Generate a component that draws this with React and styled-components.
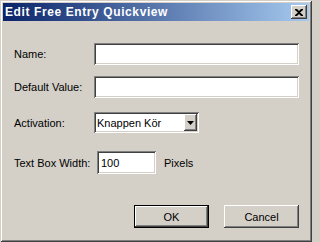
import React from "react";
import styled, { createGlobalStyle } from "styled-components";

const Global = createGlobalStyle`
  html, body { margin: 0; padding: 0; background: #d4d0c8; }
  body { font-family: Tahoma, "Liberation Sans", Arial, sans-serif; font-size: 11px; color: #000; }
`;

const Window = styled.div`
  width: 312px;
  height: 242px;
  box-sizing: border-box;
  background: #d4d0c8;
  padding: 3px;
  display: flex;
  flex-direction: column;
  box-shadow: inset 1px 1px 0 #d4d0c8, inset -1px -1px 0 #404040,
    inset 2px 2px 0 #ffffff, inset -2px -2px 0 #808080;
`;

const TitleBar = styled.div`
  height: 18px;
  display: flex;
  align-items: center;
  justify-content: space-between;
  padding: 0 2px 0 2px;
  background: linear-gradient(to right, #0a246a, #a6caf0);
`;

const Title = styled.span`
  color: #fff;
  font-weight: bold;
  font-size: 12px;
  letter-spacing: 0.6px;
`;

const CloseBtn = styled.div`
  width: 16px;
  height: 14px;
  box-sizing: border-box;
  background: #d4d0c8;
  display: flex;
  align-items: center;
  justify-content: center;
  box-shadow: inset -1px -1px 0 #404040, inset 1px 1px 0 #ffffff,
    inset -2px -2px 0 #808080;
`;

const Body = styled.div`
  flex: 1;
  display: flex;
  flex-direction: column;
  padding: 22px 10px 11px 11px;
`;

const Row = styled.div`
  display: flex;
  align-items: center;
  height: ${(p) => p.h || 22}px;
  margin-top: ${(p) => p.mt || 0}px;
`;

const Label = styled.label`
  width: ${(p) => p.w || 80}px;
  flex: none;
`;

const Field = styled.div`
  box-sizing: border-box;
  height: 100%;
  width: ${(p) => (p.w ? `${p.w}px` : "auto")};
  flex: ${(p) => (p.w ? "none" : 1)};
  background: #fff;
  display: flex;
  align-items: center;
  padding: 0 4px;
  box-shadow: inset 1px 1px 0 #808080, inset -1px -1px 0 #ffffff,
    inset 2px 2px 0 #404040, inset -2px -2px 0 #d4d0c8;
`;

const Select = styled.div`
  box-sizing: border-box;
  width: 105px;
  height: 100%;
  background: #fff;
  display: flex;
  align-items: stretch;
  padding: 2px;
  box-shadow: inset 1px 1px 0 #808080, inset -1px -1px 0 #ffffff,
    inset 2px 2px 0 #404040, inset -2px -2px 0 #d4d0c8;
`;

const SelectText = styled.span`
  flex: 1;
  display: flex;
  align-items: center;
  padding-left: 1px;
`;

const DropBtn = styled.div`
  width: 13px;
  flex: none;
  background: #d4d0c8;
  display: flex;
  align-items: center;
  justify-content: center;
  box-shadow: inset -1px -1px 0 #404040, inset 1px 1px 0 #ffffff,
    inset -2px -2px 0 #808080;
`;

const Unit = styled.span`
  margin-left: 8px;
`;

const Buttons = styled.div`
  margin-top: auto;
  display: flex;
  justify-content: flex-end;
  gap: 15px;
`;

const Button = styled.button`
  width: 75px;
  height: 23px;
  box-sizing: border-box;
  border: ${(p) => (p.primary ? "1px solid #000" : "none")};
  padding: 0;
  font: inherit;
  color: #000;
  background: #d4d0c8;
  box-shadow: inset -1px -1px 0 #404040, inset 1px 1px 0 #ffffff,
    inset -2px -2px 0 #808080;
`;

export default function App() {
  return (
    <>
      <Global />
      <Window>
        <TitleBar>
          <Title>Edit Free Entry Quickview</Title>
          <CloseBtn>
            <svg width="8" height="7" viewBox="0 0 8 7">
              <path d="M0 0h2l2 2 2-2h2v1L5 3.5 8 6v1H6L4 5 2 7H0V6l3-2.5L0 1z" fill="#000" />
            </svg>
          </CloseBtn>
        </TitleBar>
        <Body>
          <Row>
            <Label>Name:</Label>
            <Field />
          </Row>
          <Row mt={11}>
            <Label>Default Value:</Label>
            <Field />
          </Row>
          <Row mt={14} h={21}>
            <Label>Activation:</Label>
            <Select>
              <SelectText>Knappen Kör</SelectText>
              <DropBtn>
                <svg width="7" height="4" viewBox="0 0 7 4">
                  <path d="M0 0h7L3.5 4z" fill="#000" />
                </svg>
              </DropBtn>
            </Select>
          </Row>
          <Row mt={18} h={23}>
            <Label w={83}>Text Box Width:</Label>
            <Field w={59}>100</Field>
            <Unit>Pixels</Unit>
          </Row>
          <Buttons>
            <Button primary>OK</Button>
            <Button>Cancel</Button>
          </Buttons>
        </Body>
      </Window>
    </>
  );
}
